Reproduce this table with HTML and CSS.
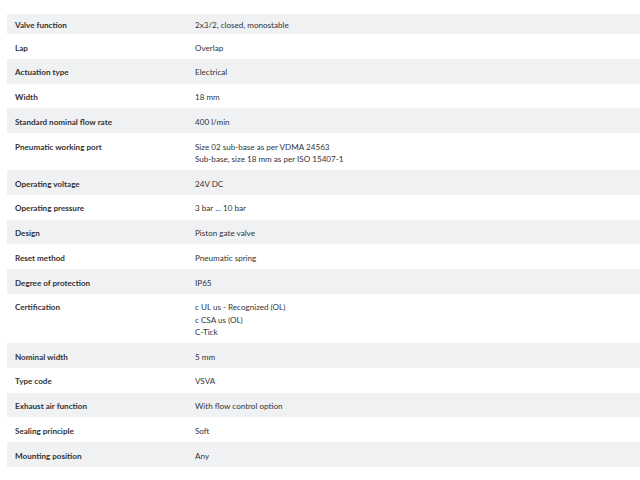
FILE: index.html
```html
<!DOCTYPE html>
<html lang="en">
<head>
    <meta charset="UTF-8">
    <meta name="viewport" content="width=device-width, initial-scale=1.0">
    <title>Technical data</title>
    <link rel="stylesheet" href="styles.css">
</head>
<body>
    <div class="spec-table">
        <div class="spec-row first">
            <div class="spec-label">Valve function</div>
            <div class="spec-value">2x3/2, closed, monostable</div>
        </div>
        <div class="spec-row">
            <div class="spec-label">Lap</div>
            <div class="spec-value">Overlap</div>
        </div>
        <div class="spec-row">
            <div class="spec-label">Actuation type</div>
            <div class="spec-value">Electrical</div>
        </div>
        <div class="spec-row">
            <div class="spec-label">Width</div>
            <div class="spec-value">18 mm</div>
        </div>
        <div class="spec-row">
            <div class="spec-label">Standard nominal flow rate</div>
            <div class="spec-value">400 l/min</div>
        </div>
        <div class="spec-row">
            <div class="spec-label">Pneumatic working port</div>
            <div class="spec-value">Size 02 sub-base as per VDMA 24563<br>Sub-base, size 18 mm as per ISO 15407-1</div>
        </div>
        <div class="spec-row">
            <div class="spec-label">Operating voltage</div>
            <div class="spec-value">24V DC</div>
        </div>
        <div class="spec-row">
            <div class="spec-label">Operating pressure</div>
            <div class="spec-value">3 bar ... 10 bar</div>
        </div>
        <div class="spec-row">
            <div class="spec-label">Design</div>
            <div class="spec-value">Piston gate valve</div>
        </div>
        <div class="spec-row">
            <div class="spec-label">Reset method</div>
            <div class="spec-value">Pneumatic spring</div>
        </div>
        <div class="spec-row">
            <div class="spec-label">Degree of protection</div>
            <div class="spec-value">IP65</div>
        </div>
        <div class="spec-row">
            <div class="spec-label">Certification</div>
            <div class="spec-value">c UL us - Recognized (OL)<br>c CSA us (OL)<br>C-Tick</div>
        </div>
        <div class="spec-row">
            <div class="spec-label">Nominal width</div>
            <div class="spec-value">5 mm</div>
        </div>
        <div class="spec-row">
            <div class="spec-label">Type code</div>
            <div class="spec-value">VSVA</div>
        </div>
        <div class="spec-row">
            <div class="spec-label">Exhaust air function</div>
            <div class="spec-value">With flow control option</div>
        </div>
        <div class="spec-row">
            <div class="spec-label">Sealing principle</div>
            <div class="spec-value">Soft</div>
        </div>
        <div class="spec-row">
            <div class="spec-label">Mounting position</div>
            <div class="spec-value">Any</div>
        </div>
    </div>
</body>
</html>
```

FILE: styles.css
```css
body {
    margin: 0;
    font-family: Lato, "Open Sans", sans-serif;
    font-size: 8.1px;
    line-height: 12.25px;
    color: #333;
    background-color: #fff;
}

.spec-table {
    margin: 14px 0 0 7px;
}

.spec-row {
    display: grid;
    grid-template-columns: 180px 1fr;
    padding: 7.5px 8px 5px;
}

.spec-row:nth-child(odd) {
    background-color: #f0f1f3;
}

.spec-row.first {
    padding-top: 4.6px;
    padding-bottom: 3.2px;
}

.spec-label {
    font-weight: 700;
    color: #333;
}

.spec-value {
    color: #333;
}
```
